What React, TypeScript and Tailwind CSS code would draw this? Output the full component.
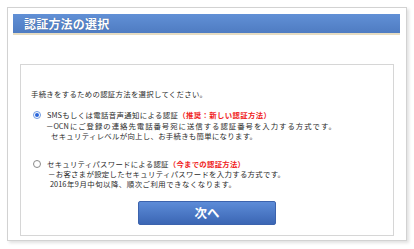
import React from "react";

const jp = { fontFamily: '"Noto Sans CJK JP", "Noto Sans", sans-serif' };

function Radio({ checked }: { checked: boolean }) {
  return (
    <span
      className={
        "mt-[1px] flex h-[8px] w-[8px] shrink-0 items-center justify-center rounded-full border " +
        (checked ? "border-[#6f9ae0] bg-white" : "border-[#8a8a8a] bg-white")
      }
    >
      {checked && <span className="h-[4px] w-[4px] rounded-full bg-[#2a66dc]" />}
    </span>
  );
}

function Line({ w, className = "", children }: { w: string; className?: string; children: React.ReactNode }) {
  return <div className={w + " text-justify [text-align-last:justify] " + className}>{children}</div>;
}

export default function App() {
  return (
    <div className="h-[249px] w-[414px] bg-white pl-[7px] pt-[7px]" style={jp}>
      <div className="flex h-[234px] w-[400px] flex-col border border-[#d2d2d2] bg-white pl-[5px] pt-[6px] shadow-[2px_2px_3px_rgba(0,0,0,0.12)]">
        <div className="flex h-[21px] w-[387px] flex-col">
          <div className="flex h-[19px] items-center bg-gradient-to-b from-[#6190d6] to-[#4f7cc2] pl-[11px]">
            <span className="text-[12px] font-bold leading-none tracking-[0.2px] text-white [text-shadow:0_0_1px_rgba(0,0,0,0.3)]">
              認証方法の選択
            </span>
          </div>
          <div className="h-[2px] bg-[#e6dcc2]" />
        </div>
        <div className="ml-[7px] mt-[29px] flex h-[172px] w-[374px] flex-col border border-[#d6d6d6] pl-[10px] pt-[24px] text-[7.4px] leading-[10px] text-[#2a2a2a]">
          <Line w="w-[176px]">手続きをするための認証方法を選択してください。</Line>
          <div className="mt-[11px] flex gap-[6px] pl-[2px]">
            <Radio checked />
            <div className="flex flex-col">
              <Line w="w-[224px]">
                SMSもしくは電話音声通知による認証
                <span className="font-semibold text-[#f01c1c]">（推奨：新しい認証方法）</span>
              </Line>
              <Line w="w-[290px]" className="ml-[-1px] mt-[1px]">
                －OCNにご登録の連絡先電話番号宛に送信する認証番号を入力する方式です。
              </Line>
              <Line w="w-[206px]" className="ml-[4px]">
                セキュリティレベルが向上し、お手続きも簡単になります。
              </Line>
            </div>
          </div>
          <div className="mt-[18px] flex gap-[6px] pl-[2px]">
            <Radio checked={false} />
            <div className="flex flex-col">
              <Line w="w-[198px]">
                セキュリティパスワードによる認証
                <span className="font-semibold text-[#f01c1c]">（今までの認証方法）</span>
              </Line>
              <Line w="w-[237px]" className="ml-[1px]">
                －お客さまが設定したセキュリティパスワードを入力する方式です。
              </Line>
              <Line w="w-[186px]" className="ml-[3px]">
                2016年9月中旬以降、順次ご利用できなくなります。
              </Line>
            </div>
          </div>
          <div className="mt-[12px] flex justify-center pr-[10px]">
            <button className="flex h-[24px] w-[138px] items-center justify-center rounded-[2px] border border-[#3c63ad] bg-gradient-to-b from-[#5d8cd8] to-[#3b66b4] text-[12.5px] font-bold text-white">
              次へ
            </button>
          </div>
        </div>
      </div>
    </div>
  );
}
